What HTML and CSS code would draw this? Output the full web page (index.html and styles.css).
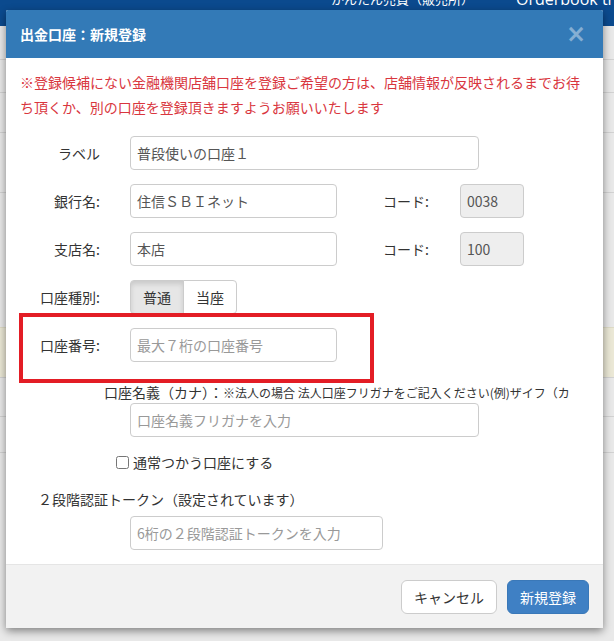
FILE: index.html
```html
<!DOCTYPE html>
<html lang="ja">
<head>
    <meta charset="UTF-8">
    <meta name="viewport" content="width=device-width, initial-scale=1.0">
    <title>出金口座：新規登録</title>
    <link rel="stylesheet" href="styles.css">
</head>
<body>
    <!-- page behind the dialog -->
    <div class="page">
        <div class="navbar">
            <span class="nav-item">かんたん売買（販売所）</span>
            <span class="nav-item nav-latin">Orderbook trade</span>
        </div>
        <div class="band" style="height: 34px"></div>
        <div class="band" style="height: 33px"></div>
        <div class="band" style="height: 40px"></div>
        <div class="band" style="height: 60px"></div>
        <div class="band band-plain" style="height: 134px"></div>
        <div class="band band-note" style="height: 51px"></div>
        <div class="band" style="height: 39px"></div>
        <div class="band" style="height: 36px"></div>
    </div>

    <div class="modal">
        <div class="modal-header">
            <h4 class="modal-title">出金口座：新規登録</h4>
            <span class="close">&times;</span>
        </div>

        <div class="modal-body">
            <p class="notice">※登録候補にない金融機関店舗口座を登録ご希望の方は、店舗情報が反映されるまでお待ち頂くか、別の口座を登録頂きますようお願いいたします</p>

            <div class="form-row first">
                <label class="row-label" for="label">ラベル</label>
                <input class="field field-wide" type="text" id="label" value="普段使いの口座１">
            </div>
            <div class="form-row">
                <label class="row-label" for="bank">銀行名:</label>
                <input class="field field-mid" type="text" id="bank" value="住信ＳＢＩネット">
                <label class="code-label" for="bank-code">コード:</label>
                <input class="field field-code" type="text" id="bank-code" value="0038" readonly>
            </div>
            <div class="form-row">
                <label class="row-label" for="branch">支店名:</label>
                <input class="field field-mid" type="text" id="branch" value="本店">
                <label class="code-label" for="branch-code">コード:</label>
                <input class="field field-code" type="text" id="branch-code" value="100" readonly>
            </div>
            <div class="form-row">
                <span class="row-label">口座種別:</span>
                <div class="btn-group">
                    <button type="button" class="toggle active">普通</button>
                    <button type="button" class="toggle">当座</button>
                </div>
            </div>
            <div class="form-row">
                <label class="row-label" for="number">口座番号:</label>
                <input class="field field-mid" type="text" id="number" placeholder="最大７桁の口座番号">
            </div>

            <div class="kana-label">口座名義（カナ）：<small>※法人の場合 法人口座フリガナをご記入ください(例)ザイフ（カ）</small></div>
            <div class="form-row kana-row">
                <input class="field field-wide" type="text" placeholder="口座名義フリガナを入力">
            </div>

            <label class="check-row"><input type="checkbox"> 通常つかう口座にする</label>

            <div class="token-label">２段階認証トークン（設定されています）</div>
            <div class="form-row token-row">
                <input class="field field-token" type="text" placeholder="6桁の２段階認証トークンを入力">
            </div>
        </div>

        <div class="modal-footer">
            <button type="button" class="btn btn-default">キャンセル</button>
            <button type="button" class="btn btn-primary">新規登録</button>
        </div>

        <!-- annotation drawn over the form -->
        <div class="highlight"></div>
    </div>
</body>
</html>
```

FILE: styles.css
```css
* {
    box-sizing: border-box;
}
body {
    margin: 0;
    padding: 0;
    font-family: "Noto Sans CJK JP", "Noto Sans", sans-serif;
    font-size: 14px;
    color: #333;
    background-color: #e9e9e9;
    overflow: hidden;
}
.page {
    height: 641px;
}
.navbar {
    display: flex;
    height: 26px;
    padding-left: 331px;
    background-color: #0b4a8e;
    overflow: hidden;
}
.nav-item {
    flex-shrink: 0;
    margin-top: -9px;
    font-size: 13px;
    line-height: 16px;
    white-space: nowrap;
    color: #fff;
}
.nav-latin {
    margin-left: 42px;
    font-family: "Open Sans", sans-serif;
    font-size: 16px;
}
.band {
    border-bottom: 1px solid #d2d2d2;
}
.band-plain {
    border-bottom: none;
}
.band-note {
    background-color: #ebe8d6;
    border-top: 1px solid #dedbc6;
}

.modal {
    position: absolute;
    top: 10px;
    left: 6px;
    width: 597px;
    background-color: #fff;
    border-radius: 2px;
    box-shadow: 0 3px 9px rgba(0, 0, 0, 0.45);
}
.modal-header {
    display: flex;
    justify-content: space-between;
    align-items: center;
    height: 48px;
    padding: 0 17px 0 14px;
    background-color: #337ab7;
    border-radius: 2px 2px 0 0;
}
.modal-title {
    margin: 0;
    font-size: 14px;
    font-weight: bold;
    color: #fff;
}
.close {
    font-family: "DejaVu Sans", sans-serif;
    font-size: 24px;
    font-weight: bold;
    line-height: 24px;
    color: #fff;
    opacity: 0.4;
}
.modal-body {
    padding: 12px 14px 14px;
}
.notice {
    margin: 0;
    font-size: 14px;
    line-height: 25px;
    color: #d9363e;
}

.form-row {
    display: flex;
    align-items: center;
    margin-top: 14px;
}
.form-row.first {
    margin-top: 16px;
}
.row-label {
    width: 80px;
    margin-right: 30px;
    text-align: right;
}
.field {
    height: 34px;
    padding: 6px;
    font-family: inherit;
    font-size: 14px;
    color: #555;
    background-color: #fff;
    border: 1px solid #ccc;
    border-radius: 4px;
    outline: none;
}
.field::placeholder {
    color: #999;
}
.field-wide {
    width: 349px;
}
.field-mid {
    width: 207px;
}
.field-code {
    width: 64px;
    background-color: #eee;
}
.field-token {
    width: 253px;
}
.code-label {
    margin-left: 46px;
    margin-right: 31px;
}

.btn-group {
    display: flex;
}
.toggle {
    height: 34px;
    padding: 6px 12px;
    font-family: inherit;
    font-size: 14px;
    color: #333;
    background-color: #fff;
    border: 1px solid #ccc;
}
.toggle:first-child {
    border-radius: 4px 0 0 4px;
}
.toggle:last-child {
    margin-left: -1px;
    border-radius: 0 4px 4px 0;
}
.toggle.active {
    background-color: #e6e6e6;
    box-shadow: inset 0 3px 5px rgba(0, 0, 0, 0.125);
}

.kana-label {
    margin: 20px 0 0 84px;
    width: 465px;
    line-height: 20px;
    white-space: nowrap;
    overflow: hidden;
}
.kana-label small {
    font-size: 12px;
}
.form-row.kana-row {
    margin-top: 0;
    padding-left: 110px;
}
.check-row {
    display: flex;
    align-items: center;
    margin: 15px 0 0 96px;
    line-height: 20px;
}
.check-row input {
    width: 13px;
    height: 13px;
    margin: 0 4px 0 0;
}
.token-label {
    margin: 17px 0 0 18px;
    line-height: 20px;
}
.form-row.token-row {
    margin-top: 7px;
    padding-left: 110px;
}

.modal-footer {
    display: flex;
    justify-content: flex-end;
    gap: 10px;
    padding: 15px 14px 14px;
    background-color: #f2f2f2;
    border-top: 1px solid #e5e5e5;
}
.btn {
    height: 34px;
    padding: 6px 12px;
    font-family: inherit;
    font-size: 14px;
    border: 1px solid #ccc;
    border-radius: 6px;
}
.btn-default {
    width: 96px;
    color: #333;
    background-color: #fff;
}
.btn-primary {
    width: 82px;
    color: #fff;
    background-color: #3f80c4;
    border-color: #3a78b8;
}

.highlight {
    position: absolute;
    top: 303px;
    left: 13px;
    width: 355px;
    height: 70px;
    border: 4px solid #e31d25;
}
```
